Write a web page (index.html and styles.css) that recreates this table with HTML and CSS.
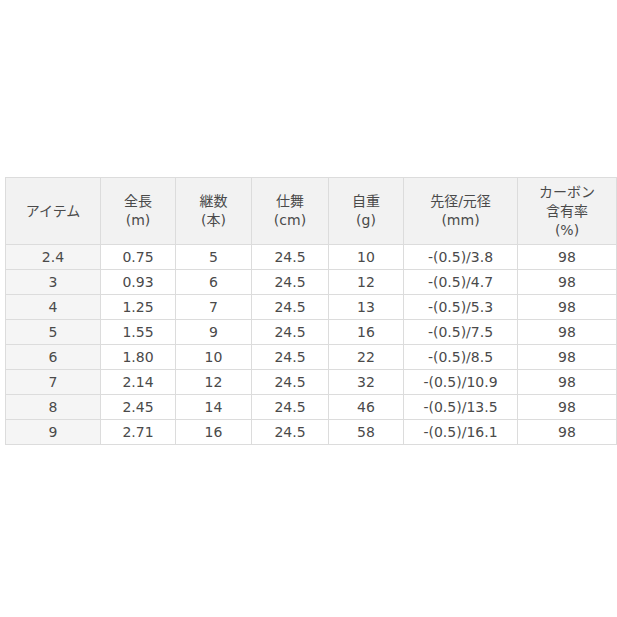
FILE: index.html
```html
<!DOCTYPE html>
<html lang="ja">
<head>
<meta charset="utf-8">
<link rel="stylesheet" href="styles.css">
</head>
<body>
<table class="spec">
  <colgroup>
    <col class="c1"><col class="c2"><col class="c3"><col class="c4"><col class="c5"><col class="c6"><col class="c7">
  </colgroup>
  <thead>
    <tr>
      <th>アイテム</th>
      <th>全長<br>(m)</th>
      <th>継数<br>(本)</th>
      <th>仕舞<br>(cm)</th>
      <th>自重<br>(g)</th>
      <th>先径/元径<br>(mm)</th>
      <th>カーボン<br>含有率<br>(%)</th>
    </tr>
  </thead>
  <tbody>
    <tr><th>2.4</th><td>0.75</td><td>5</td><td>24.5</td><td>10</td><td>-(0.5)/3.8</td><td>98</td></tr>
    <tr><th>3</th><td>0.93</td><td>6</td><td>24.5</td><td>12</td><td>-(0.5)/4.7</td><td>98</td></tr>
    <tr><th>4</th><td>1.25</td><td>7</td><td>24.5</td><td>13</td><td>-(0.5)/5.3</td><td>98</td></tr>
    <tr><th>5</th><td>1.55</td><td>9</td><td>24.5</td><td>16</td><td>-(0.5)/7.5</td><td>98</td></tr>
    <tr><th>6</th><td>1.80</td><td>10</td><td>24.5</td><td>22</td><td>-(0.5)/8.5</td><td>98</td></tr>
    <tr><th>7</th><td>2.14</td><td>12</td><td>24.5</td><td>32</td><td>-(0.5)/10.9</td><td>98</td></tr>
    <tr><th>8</th><td>2.45</td><td>14</td><td>24.5</td><td>46</td><td>-(0.5)/13.5</td><td>98</td></tr>
    <tr><th>9</th><td>2.71</td><td>16</td><td>24.5</td><td>58</td><td>-(0.5)/16.1</td><td>98</td></tr>
  </tbody>
</table>
</body>
</html>
```
FILE: styles.css
```css
html, body {
  margin: 0;
  padding: 0;
  background: #fff;
}
body {
  padding: 177px 0 0 5px;
  font-family: "DejaVu Sans", "Noto Sans CJK JP", sans-serif;
  font-size: 14px;
  font-weight: 400;
  color: #4a4a4a;
}
.spec {
  border-collapse: collapse;
  table-layout: fixed;
  width: 611px;
}
.c1 { width: 95px; }
.c2 { width: 75px; }
.c3 { width: 76px; }
.c4 { width: 77px; }
.c5 { width: 75px; }
.c6 { width: 114px; }
.c7 { width: 99px; }
.spec th, .spec td {
  border: 1px solid #dcdcdc;
  text-align: center;
  vertical-align: middle;
  font-weight: 400;
  padding: 0 4px;
}
.spec thead th {
  background: #f2f2f2;
  height: 66px;
  line-height: 19px;
  padding: 0 4px;
}
.spec tbody th {
  background: #f5f5f5;
}
.spec tbody td, .spec tbody th {
  height: 24px;
  line-height: 16px;
}
```
